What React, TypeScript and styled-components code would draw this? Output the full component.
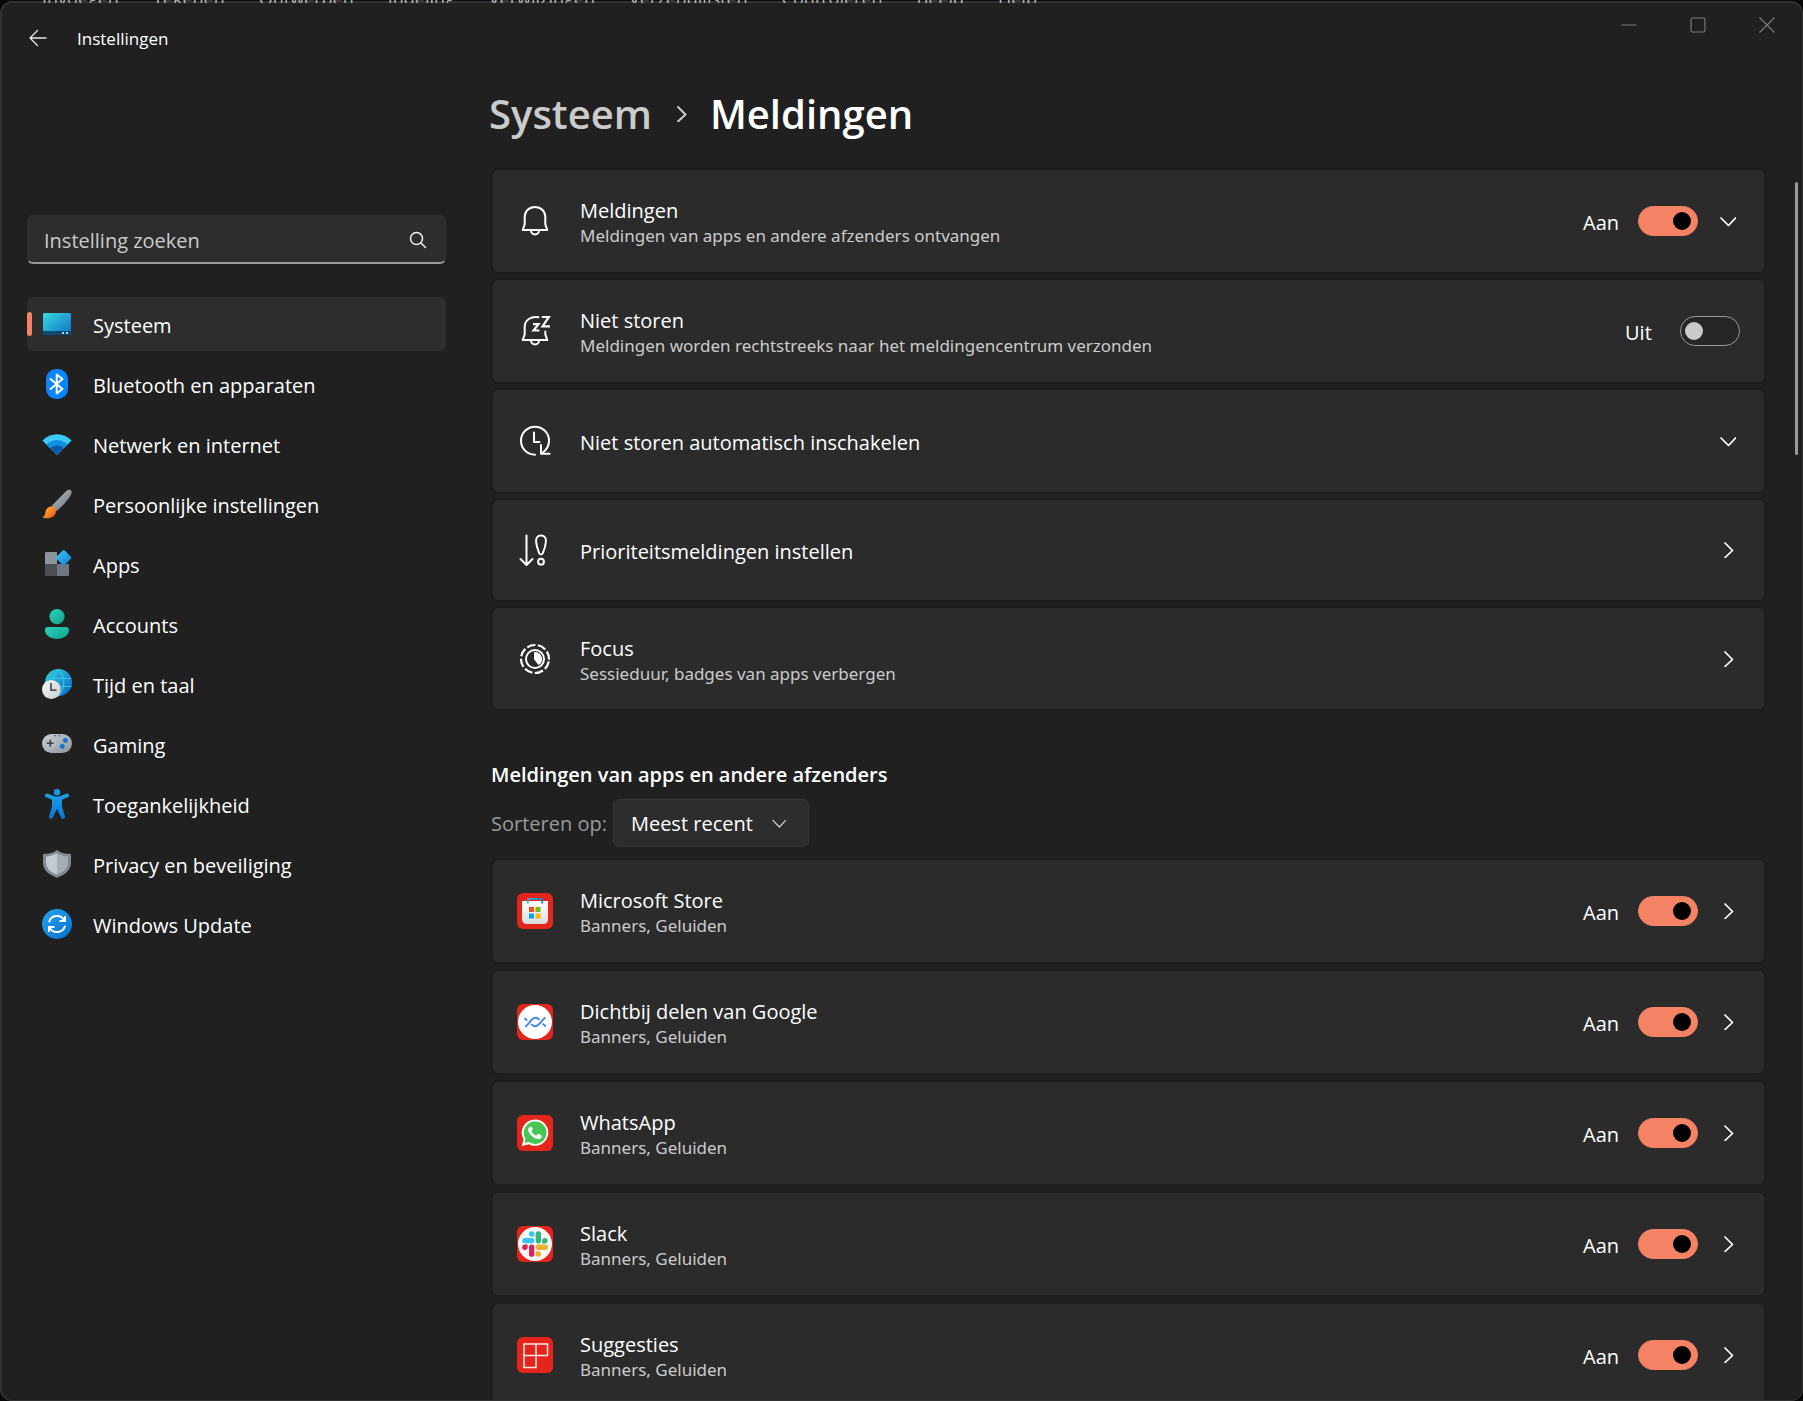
import React, { useState } from "react";
import styled, { createGlobalStyle } from "styled-components";

const color = {
  bg: "#202020",
  card: "#2b2b2b",
  control: "#2d2d2d",
  edge: "#1d1d1d",
  frame: "#333233",
  text: "#ffffff",
  muted: "#cbcbcb",
  faint: "#9a9a9a",
  accent: "#f48264",
};

const GlobalStyle = createGlobalStyle`
  *, *::before, *::after { box-sizing: border-box; }
  html, body { margin: 0; background: #0a090a; }
  body, input, select, button {
    font-family: "Open Sans", "Noto Sans", sans-serif;
    font-size: 20px;
    color: ${color.text};
  }
`;

/* ---------- window frame ---------- */

const Desktop = styled.div`
  position: relative;
  height: 100vh;
  padding-top: 1px;
  overflow: hidden;
`;

const BackdropMenu = styled.div`
  position: absolute;
  top: 0;
  left: 42px;
  display: flex;
  align-items: flex-end;
  gap: 34px;
  height: 3px;
  overflow: hidden;
  font-size: 18px;
  line-height: 10px;
  color: #b4b4b4;
`;

const Window = styled.div`
  display: flex;
  flex-direction: column;
  height: 100%;
  border: 2px solid ${color.frame};
  border-right-width: 1px;
  border-bottom-width: 1px;
  border-radius: 12px;
  background: ${color.bg};
  overflow: hidden;
`;

const TitleBar = styled.header`
  display: flex;
  align-items: flex-start;
  justify-content: space-between;
  height: 72px;
  flex: none;
`;

const TitleGroup = styled.div`
  display: flex;
  align-items: center;
  height: 70px;
`;

const WindowTitle = styled.span`
  font-size: 17px;
  line-height: 24px;
  padding: 2px 0 0 4px;
`;

const IconButton = styled.button<{ $width: number; $height: number }>`
  display: flex;
  align-items: center;
  justify-content: center;
  width: ${(p) => p.$width}px;
  height: ${(p) => p.$height}px;
  padding: 0;
  border: 0;
  background: none;
  flex: none;
`;

const CaptionButtons = styled.div`
  display: flex;
  padding-right: 1px;
`;

const Body = styled.div`
  display: flex;
  flex: 1;
  min-height: 0;
`;

/* ---------- sidebar ---------- */

const Sidebar = styled.aside`
  width: 444px;
  flex: none;
  padding: 140px 0 0 25px;
`;

const SearchBox = styled.label`
  display: flex;
  align-items: center;
  height: 49px;
  padding: 2px 18px 0 16px;
  border: 1px solid #303030;
  border-bottom: 2px solid ${color.faint};
  border-radius: 6px;
  background: ${color.control};
`;

const SearchInput = styled.input`
  flex: 1;
  min-width: 0;
  padding: 0;
  border: 0;
  outline: 0;
  background: none;
  &::placeholder {
    color: ${color.muted};
    opacity: 1;
  }
`;

const NavList = styled.nav`
  display: flex;
  flex-direction: column;
  gap: 6px;
  margin-top: 33px;
`;

const NavLink = styled.a<{ $active: boolean }>`
  position: relative;
  display: flex;
  align-items: center;
  gap: 21px;
  height: 54px;
  padding-left: 15px;
  border-radius: 6px;
  color: ${color.text};
  text-decoration: none;
  background: ${(p) => (p.$active ? color.control : "transparent")};
  &::before {
    content: "";
    display: ${(p) => (p.$active ? "block" : "none")};
    position: absolute;
    left: 0;
    top: 15px;
    width: 5px;
    height: 24px;
    border-radius: 3px;
    background: ${color.accent};
  }
`;

const NavText = styled.span`
  line-height: 28px;
  padding-top: 4px;
`;

/* ---------- content ---------- */

const Content = styled.main`
  flex: 1;
  min-width: 0;
  padding: 6px 31px 0 47px;
  overflow: hidden;
`;

const Breadcrumb = styled.div`
  display: flex;
  align-items: center;
  height: 66px;
  margin-left: -4px;
  font-size: 40px;
  line-height: 66px;
  font-weight: 600;
  white-space: nowrap;
`;

const CrumbLink = styled.a`
  color: ${color.muted};
  text-decoration: none;
`;

const CrumbGap = styled.span`
  display: flex;
  justify-content: center;
  width: 58px;
`;

const PageTitle = styled.h1`
  margin: 0;
  font: inherit;
`;

const CardList = styled.div<{ $gap: number; $top: number }>`
  display: flex;
  flex-direction: column;
  gap: ${(p) => p.$gap}px;
  margin-top: ${(p) => p.$top}px;
`;

const Card = styled.section<{ $height: number }>`
  display: flex;
  align-items: center;
  flex: none;
  height: ${(p) => p.$height}px;
  padding: 0 24px;
  border-radius: 5px;
  background: ${color.card};
  box-shadow: 0 0 0 2px ${color.edge};
`;

const CardText = styled.div`
  flex: 1;
  min-width: 0;
  padding: 4px 0 0 27px;
`;

const CardTitle = styled.div`
  line-height: 26px;
`;

const CardNote = styled.div`
  font-family: "Noto Sans", "Open Sans", sans-serif;
  font-size: 17px;
  line-height: 24px;
  color: ${color.muted};
`;

const SwitchLabel = styled.label`
  display: flex;
  align-items: center;
`;

const SwitchState = styled.span`
  width: 55px;
  line-height: 28px;
  padding-top: 4px;
`;

const Switch = styled.input`
  appearance: none;
  display: flex;
  align-items: center;
  width: 60px;
  height: 30px;
  margin: 0;
  padding: 0 4px;
  border: 1px solid ${color.faint};
  border-radius: 15px;
  background: #262626;
  &::before {
    content: "";
    width: 18px;
    height: 18px;
    border-radius: 50%;
    background: ${color.muted};
  }
  &:checked {
    justify-content: flex-end;
    padding: 0 6px;
    border-color: ${color.accent};
    background: ${color.accent};
  }
  &:checked::before {
    background: #000;
  }
`;

const CardAction = styled(IconButton)`
  margin-left: 18px;
`;

const SectionTitle = styled.h2`
  margin: 52px 0 0 -2px;
  font-size: 20px;
  line-height: 28px;
  font-weight: 600;
`;

const SortRow = styled.div`
  display: flex;
  align-items: center;
  gap: 6px;
  margin: 10px 0 0 -2px;
`;

const SortLabel = styled.label`
  color: ${color.faint};
`;

const SelectBox = styled.div`
  display: grid;
  align-items: center;
  width: 196px;
  & > * {
    grid-area: 1 / 1;
  }
  & > svg {
    justify-self: end;
    margin-right: 23px;
    pointer-events: none;
  }
`;

const Select = styled.select`
  appearance: none;
  width: 100%;
  height: 48px;
  padding: 0 40px 0 17px;
  border: 1px solid #353535;
  border-radius: 6px;
  background: ${color.control};
`;

const ScrollThumb = styled.div`
  flex: none;
  align-self: flex-start;
  width: 3px;
  height: 273px;
  margin: 107px 4px 0 0;
  border-radius: 2px;
  background: ${color.faint};
`;

/* ---------- glyphs ---------- */

const Chevron = ({ dir, size = 16, stroke = "#fff", width = 1.7 }: { dir: "down" | "right"; size?: number; stroke?: string; width?: number }) => (
  <svg width={size} height={size} viewBox="0 0 16 16" fill="none" stroke={stroke} strokeWidth={width} strokeLinecap="round" strokeLinejoin="round" aria-hidden="true">
    <path d={dir === "down" ? "M1 5 8.500 12.500 15.500 5" : "M5 1 12.500 8.500 5 15.500"} />
  </svg>
);

const Line = ({ children }: { children: React.ReactNode }) => (
  <svg width="36" height="36" viewBox="0 0 36 36" fill="none" stroke="#fff" strokeWidth="2" strokeLinecap="round" strokeLinejoin="round" aria-hidden="true">
    {children}
  </svg>
);

const BellIcon = () => (
  <Line>
    <path d="M18 4C12.200 4 7.700 8.300 7.700 13.800v7.500L5.700 27h24.600l-2-5.700v-7.500C28.300 8.300 23.800 4 18 4z" />
    <path d="M14 27.500a4 4 0 0 0 8 0" />
  </Line>
);

const SnoozeIcon = () => (
  <Line>
    <path d="M21.500 4.200C14 3 7.700 7 7.700 13.800v7.500L5.700 27h24.600l-2-5.700V18.500" />
    <path d="M14 27.500a4 4 0 0 0 8 0" />
    <path d="M16 11.200h5.500l-5 6.300h6M24.800 4h7l-6.300 9.300h7.500" strokeWidth="2.200" strokeLinecap="butt" strokeLinejoin="miter" />
  </Line>
);

const ClockIcon = () => (
  <Line>
    <path d="M18 31.700a14 14 0 1 1 14-14c0 5-2.500 9.400-7 12.300" />
    <path d="M17 9.500V19h5.500M24 22v8.800h8.500" />
  </Line>
);

const PriorityIcon = () => (
  <Line>
    <path d="M9.500 3.500v29M3.500 27l6 6 6-6" />
    <path d="M24 3.500c-3.600 0-5.200 2.600-4.900 6.200.3 4.500 1.800 8.300 3 11.300.8 2 3 2 3.800 0 1.200-3 2.700-6.800 3-11.300.3-3.600-1.300-6.200-4.900-6.200z" />
    <circle cx="24" cy="29.700" r="2.900" />
  </Line>
);

const FocusIcon = () => (
  <Line>
    <circle cx="18" cy="18" r="14" strokeWidth="2.200" strokeDasharray="8.500 2.500" strokeLinecap="butt" transform="rotate(10 18 18)" />
    <circle cx="18" cy="18" r="9" />
    <path d="M18 12v6l3.800 4.800A6.100 6.100 0 0 0 18 12z" fill="#fff" />
  </Line>
);

const Tile = ({ children }: { children: React.ReactNode }) => (
  <svg width="36" height="36" viewBox="0 0 36 36" aria-hidden="true">
    <rect width="36" height="36" rx="6" fill="#e3251b" />
    {children}
  </svg>
);

const StoreIcon = () => (
  <Tile>
    <defs>
      <linearGradient id="bag" x1="0" y1="0" x2="0" y2="1"><stop stopColor="#fff" /><stop offset="1" stopColor="#dcdcdc" /></linearGradient>
      <linearGradient id="handle" x1="0" x2="1"><stop stopColor="#2bb4e8" /><stop offset="1" stopColor="#1683cb" /></linearGradient>
    </defs>
    <path d="M5 8h26v18.500a4.500 4.500 0 0 1-4.500 4.500h-17A4.500 4.500 0 0 1 5 26.500z" fill="url(#bag)" />
    <path d="M10.800 10.500V7a1.200 1.200 0 0 1 1.200-1.200h12A1.200 1.200 0 0 1 25.200 7v3.500" fill="none" stroke="url(#handle)" strokeWidth="1.800" />
    <path d="M12 14h5v5h-5z" fill="#f25022" />
    <path d="M18.500 14h5v5h-5z" fill="#7fba00" />
    <path d="M12 20.500h5v5h-5z" fill="#00a4ef" />
    <path d="M18.500 20.500h5v5h-5z" fill="#ffb900" />
  </Tile>
);

const NearbyIcon = () => (
  <Tile>
    <circle cx="18" cy="18" r="17" fill="#fff" />
    <g fill="none" stroke="#4285f4" strokeWidth="1.900">
      <path d="M8 22.800c4-2 6-9 10.500-9 1.700 0 2.900.9 4 2M28.500 13.700c-4 2-6 8.500-10.500 8.500-1.700 0-2.900-.9-4-2" />
      <path d="M7.500 14l2.600 2.600M25.800 19.600l3 3" />
    </g>
  </Tile>
);

const WhatsAppIcon = () => (
  <Tile>
    <path d="M18 4.400A13.200 13.200 0 0 0 6.500 24.200L4.800 31l7-1.800A13.200 13.200 0 1 0 18 4.400z" fill="#fff" />
    <path d="M18 6.500A11.200 11.200 0 0 0 8.500 23.600l-1.100 4.500 4.600-1.200A11.200 11.200 0 1 0 18 6.500z" fill="#45c655" />
    <path d="M13.400 11.700c-.9 0-2.300 1.300-2.300 3.100 0 4 6.400 9.300 10.200 9.300 1.700 0 3.500-1 3.500-3.100 0-.7-2.700-2-3.500-2.200-.8 0-1.200 1.900-2.100 1.700-1.700-.4-4.100-2.700-4.600-4-.3-.8 1.200-1.400 1.200-2.200 0-.6-1-2.600-1.500-2.600z" fill="#fff" />
  </Tile>
);

const SlackIcon = () => (
  <Tile>
    <circle cx="18" cy="18" r="17" fill="#f6f6f6" />
    <g fill="#36c5f0"><path d="M14.700 5.200a2.700 2.700 0 1 0 0 5.400h2.700V7.900a2.700 2.700 0 0 0-2.700-2.700z" /><rect x="5.200" y="12" width="12.200" height="5.300" rx="2.650" /></g>
    <g fill="#2eb67d"><rect x="18.700" y="5.200" width="5.300" height="12.200" rx="2.650" /><path d="M30.600 14.700a2.700 2.700 0 1 0-5.400 0v2.700h2.700a2.700 2.700 0 0 0 2.700-2.700z" /></g>
    <g fill="#e01e5a"><rect x="12" y="18.600" width="5.300" height="12.200" rx="2.650" /><path d="M5.200 21.300a2.700 2.700 0 1 0 5.400 0v-2.700H7.900a2.700 2.700 0 0 0-2.700 2.700z" /></g>
    <g fill="#ecb22e"><rect x="18.700" y="18.600" width="12.200" height="5.300" rx="2.650" /><path d="M21.300 30.700a2.700 2.700 0 1 0 0-5.400h-2.600V28a2.700 2.700 0 0 0 2.600 2.700z" /></g>
  </Tile>
);

const SuggestIcon = () => (
  <Tile>
    <path d="M7 7h23.500v11.500H7zM7 18.500V30.500h12V7" fill="none" stroke="#ffe9e6" strokeWidth="1.500" />
  </Tile>
);

const Nav = ({ children }: { children: React.ReactNode }) => (
  <svg width="30" height="30" viewBox="0 0 30 30" aria-hidden="true">{children}</svg>
);

const navIcons: Record<string, React.ReactNode> = {
  system: (
    <Nav>
      <defs><linearGradient id="screen" x1="0" y1="0" x2="1" y2="1"><stop stopColor="#39dbe0" /><stop offset="1" stopColor="#0f6cc4" /></linearGradient></defs>
      <rect x="1" y="4" width="28" height="22" rx="1.500" fill="url(#screen)" />
      <path d="M1 22h28v2.500a1.500 1.500 0 0 1-1.500 1.500h-25A1.500 1.500 0 0 1 1 24.500z" fill="#0b4a73" />
      <path d="M20 23h2v2h-2zM24 23h2v2h-2z" fill="#b5d6e8" />
    </Nav>
  ),
  bluetooth: (
    <Nav>
      <rect x="4" width="22" height="30" rx="10" fill="#0a84ff" />
      <path d="M8.500 10 20.500 20 14.700 24.500V5.500L20.500 10 8.500 20" fill="none" stroke="#fff" strokeWidth="2" strokeLinejoin="round" strokeLinecap="round" />
    </Nav>
  ),
  network: (
    <Nav>
      <path d="M15 26 .4 11.600C8.500 3.200 21.500 3.200 29.600 11.600z" fill="#3ccbf4" />
      <path d="M15 26 4.500 15.600c5.800-6 15.200-6 21 0z" fill="#1390df" />
      <path d="M15 26 8.300 19.300c3.700-3.800 9.700-3.800 13.400 0z" fill="#0c59a4" />
    </Nav>
  ),
  personal: (
    <Nav>
      <defs>
        <linearGradient id="shaft" x1="0" y1="0" x2="1" y2="1"><stop stopColor="#b6bcc2" /><stop offset="1" stopColor="#6c737a" /></linearGradient>
        <linearGradient id="hair" x1="0" y1="0" x2="1" y2="1"><stop stopColor="#ffc02e" /><stop offset="1" stopColor="#e8501c" /></linearGradient>
      </defs>
      <path d="M9.500 17 24 2.200C26.500-.3 30.500.5 29.500 4 28 9 20 18 14.500 22z" fill="url(#shaft)" />
      <path d="M9.500 17.500c3-.4 5 2 4.500 5-.6 4.500-4.500 7-9.500 6.800C2.500 29.200 1 29 .5 28c2.500-1 2.500-2.500 3-5.500.5-2.800 3-4.700 6-5z" fill="url(#hair)" />
    </Nav>
  ),
  apps: (
    <Nav>
      <defs><linearGradient id="tile" x1="0" y1="0" x2="1" y2="1"><stop stopColor="#3fd0f5" /><stop offset="1" stopColor="#0a78d4" /></linearGradient></defs>
      <path d="M4 3h11v12H3V4a1 1 0 0 1 1-1z" fill="#8d949d" />
      <path d="M3 15h12v12H4a1 1 0 0 1-1-1z" fill="#4b4f54" />
      <path d="M15 15h12v11a1 1 0 0 1-1 1H15z" fill="#70767f" />
      <path d="M20.700 1.500a1.400 1.400 0 0 1 2 0l6.200 6.200a1.400 1.400 0 0 1 0 2l-6.200 6.200a1.400 1.400 0 0 1-2 0l-6.200-6.200a1.400 1.400 0 0 1 0-2z" fill="url(#tile)" />
    </Nav>
  ),
  accounts: (
    <Nav>
      <defs><linearGradient id="person" x1="0" y1="0" x2="1" y2="1"><stop stopColor="#2ad4bd" /><stop offset="1" stopColor="#12a08a" /></linearGradient></defs>
      <circle cx="15" cy="7.600" r="7.600" fill="url(#person)" />
      <path d="M6 18h18a3 3 0 0 1 3 3c0 5.500-5.500 9-12 9S3 26.500 3 21a3 3 0 0 1 3-3z" fill="url(#person)" />
    </Nav>
  ),
  time: (
    <Nav>
      <defs>
        <linearGradient id="globe" x1="0" y1="0" x2="1" y2="1"><stop stopColor="#2ed3d6" /><stop offset="1" stopColor="#0b66c8" /></linearGradient>
        <linearGradient id="dial" x1="0" y1="0" x2="1" y2="1"><stop stopColor="#fafafa" /><stop offset="1" stopColor="#c9cbcd" /></linearGradient>
      </defs>
      <circle cx="16.500" cy="13.500" r="13.500" fill="url(#globe)" />
      <path d="M4 9.500h25M4 17.500h25.500M16.500 0c-7 7-7 20 0 27M16.500 0c7 7 7 20 0 27" fill="none" stroke="#35c3ea" strokeWidth="1.100" />
      <circle cx="9.400" cy="20.500" r="9.400" fill="url(#dial)" />
      <path d="M9 14v7.200h5.500" fill="none" stroke="#555" strokeWidth="1.800" />
    </Nav>
  ),
  gaming: (
    <Nav>
      <defs><linearGradient id="pad" x1="0" y1="0" x2="1" y2="1"><stop stopColor="#ccd0d5" /><stop offset="1" stopColor="#8f959c" /></linearGradient></defs>
      <rect y="5" width="30" height="19" rx="9.500" fill="url(#pad)" />
      <circle cx="8.300" cy="14.300" r="5.500" fill="#b9bec4" />
      <path d="M8.300 10.800v7M4.800 14.300h7" stroke="#3c4045" strokeWidth="1.600" />
      <circle cx="23.300" cy="11.400" r="2.400" fill="#0b74d1" />
      <circle cx="20.300" cy="17.400" r="2.400" fill="#0b74d1" />
      <circle cx="13" cy="6.800" r=".8" fill="#3c4045" />
      <circle cx="17.300" cy="6.800" r=".8" fill="#3c4045" />
    </Nav>
  ),
  access: (
    <Nav>
      <defs><linearGradient id="figure" x1="0" y1="0" x2="0" y2="1"><stop stopColor="#1da0e8" /><stop offset="1" stopColor="#0b76d6" /></linearGradient></defs>
      <circle cx="15" cy="3.200" r="3.200" fill="#1a9ae6" />
      <path d="M5.700 4.700 11.500 7q3.500 1.300 7 0l5.800-2.300c2.600-.9 3.900 2.600 1.400 3.600L20 10.700v7l2.900 9.500c.7 2.600-2.700 3.800-3.800 1.300L15 19.800l-4.100 8.700c-1.100 2.500-4.500 1.300-3.800-1.300L10 17.700v-7L4.300 8.300C1.800 7.300 3.100 3.800 5.700 4.700z" fill="url(#figure)" />
    </Nav>
  ),
  privacy: (
    <Nav>
      <path d="M15 1c4 3 8.500 4 14 4v8.500C29 21 23 26 15 28.700 7 26 1 21 1 13.500V5c5.500 0 10-1 14-4z" fill="#848a91" />
      <path d="M15 4.200C11.500 6.300 8 7.300 4 7.600V13.500c0 6 4.500 9.800 11 12.200z" fill="#c5cad0" />
      <path d="M15 4.200c3.500 2.100 7 3.100 11 3.400V13.500c0 6-4.500 9.800-11 12.200z" fill="#a7adb4" />
    </Nav>
  ),
  update: (
    <Nav>
      <defs><linearGradient id="sync" x1="0" y1="0" x2="1" y2="1"><stop stopColor="#27a5ec" /><stop offset="1" stopColor="#0570d0" /></linearGradient></defs>
      <circle cx="15" cy="15" r="15" fill="url(#sync)" />
      <path d="M7 13.200a8.300 8.300 0 0 1 15-2.500M23 16.800a8.300 8.300 0 0 1-15 2.500" fill="none" stroke="#fff" strokeWidth="2" />
      <path d="M23 7v5h-5.500M7 23v-5h5.500" fill="none" stroke="#fff" strokeWidth="2" />
    </Nav>
  ),
};

/* ---------- data ---------- */

const menuWords = ["Invoegen", "Tekenen", "Ontwerpen", "Indeling", "Verwijzingen", "Verzendlijsten", "Controleren", "Beeld", "Help"];

const navItems = [
  ["system", "Systeem"],
  ["bluetooth", "Bluetooth en apparaten"],
  ["network", "Netwerk en internet"],
  ["personal", "Persoonlijke instellingen"],
  ["apps", "Apps"],
  ["accounts", "Accounts"],
  ["time", "Tijd en taal"],
  ["gaming", "Gaming"],
  ["access", "Toegankelijkheid"],
  ["privacy", "Privacy en beveiliging"],
  ["update", "Windows Update"],
];

type Row = {
  icon: React.ReactNode;
  title: string;
  note?: string;
  on?: boolean;
  chevron?: "down" | "right";
  height?: number;
};

const settings: Row[] = [
  { icon: <BellIcon />, title: "Meldingen", note: "Meldingen van apps en andere afzenders ontvangen", on: true, chevron: "down" },
  { icon: <SnoozeIcon />, title: "Niet storen", note: "Meldingen worden rechtstreeks naar het meldingencentrum verzonden", on: false },
  { icon: <ClockIcon />, title: "Niet storen automatisch inschakelen", chevron: "down" },
  { icon: <PriorityIcon />, title: "Prioriteitsmeldingen instellen", chevron: "right", height: 100 },
  { icon: <FocusIcon />, title: "Focus", note: "Sessieduur, badges van apps verbergen", chevron: "right", height: 101 },
];

const senders: Row[] = [
  { icon: <StoreIcon />, title: "Microsoft Store" },
  { icon: <NearbyIcon />, title: "Dichtbij delen van Google" },
  { icon: <WhatsAppIcon />, title: "WhatsApp" },
  { icon: <SlackIcon />, title: "Slack" },
  { icon: <SuggestIcon />, title: "Suggesties" },
].map((s) => ({ ...s, note: "Banners, Geluiden", on: true, chevron: "right" as const }));

const SettingCard = ({ icon, title, note, on, chevron, height = 102 }: Row) => {
  const [checked, setChecked] = useState(!!on);
  return (
    <Card $height={height}>
      {icon}
      <CardText>
        <CardTitle>{title}</CardTitle>
        {note && <CardNote>{note}</CardNote>}
      </CardText>
      {on !== undefined && (
        <SwitchLabel>
          <SwitchState>{checked ? "Aan" : "Uit"}</SwitchState>
          <Switch type="checkbox" role="switch" aria-label={title} checked={checked} onChange={() => setChecked(!checked)} />
        </SwitchLabel>
      )}
      {chevron && (
        <CardAction type="button" $width={24} $height={36} aria-label={title}>
          <Chevron dir={chevron} />
        </CardAction>
      )}
    </Card>
  );
};

export default function App() {
  return (
    <>
      <GlobalStyle />
      <Desktop>
        <Window>
          <TitleBar>
            <TitleGroup>
              <IconButton type="button" $width={71} $height={48} aria-label="Terug">
                <svg width="18" height="18" viewBox="0 0 18 18" fill="none" stroke="#e8e8e8" strokeWidth="1.300" strokeLinecap="round" strokeLinejoin="round"><path d="M17 9H1.500M8.500 1.500 1 9l7.500 7.500" /></svg>
              </IconButton>
              <WindowTitle>Instellingen</WindowTitle>
            </TitleGroup>
            <CaptionButtons>
              <IconButton type="button" $width={69} $height={44} aria-label="Minimaliseren">
                <svg width="16" height="16" viewBox="0 0 16 16" stroke="#7a7a7a" strokeWidth="1.200"><path d="M.5 8h15" /></svg>
              </IconButton>
              <IconButton type="button" $width={69} $height={44} aria-label="Maximaliseren">
                <svg width="16" height="16" viewBox="0 0 16 16" fill="none" stroke="#7a7a7a" strokeWidth="1.200"><rect x="1" y="1" width="14" height="14" rx="1.500" /></svg>
              </IconButton>
              <IconButton type="button" $width={69} $height={44} aria-label="Sluiten">
                <svg width="16" height="16" viewBox="0 0 16 16" stroke="#7a7a7a" strokeWidth="1.200"><path d="M.5.5l15 15M15.500.5l-15 15" /></svg>
              </IconButton>
            </CaptionButtons>
          </TitleBar>
          <Body>
            <Sidebar>
              <SearchBox>
                <SearchInput type="text" placeholder="Instelling zoeken" aria-label="Instelling zoeken" />
                <svg width="18" height="18" viewBox="0 0 18 18" fill="none" stroke="#f0f0f0" strokeWidth="1.500" strokeLinecap="round"><circle cx="7.500" cy="7.500" r="6" /><path d="M12 12l4.500 4.500" /></svg>
              </SearchBox>
              <NavList>
                {navItems.map(([id, label]) => (
                  <NavLink key={id} href={`#${id}`} $active={id === "system"}>
                    {navIcons[id]}
                    <NavText>{label}</NavText>
                  </NavLink>
                ))}
              </NavList>
            </Sidebar>
            <Content>
              <Breadcrumb>
                <CrumbLink href="#system">Systeem</CrumbLink>
                <CrumbGap><Chevron dir="right" stroke={color.muted} width={2} /></CrumbGap>
                <PageTitle>Meldingen</PageTitle>
              </Breadcrumb>
              <CardList $gap={8} $top={23}>
                {settings.map((row) => <SettingCard key={row.title} {...row} />)}
              </CardList>
              <SectionTitle>Meldingen van apps en andere afzenders</SectionTitle>
              <SortRow>
                <SortLabel htmlFor="sort">Sorteren op:</SortLabel>
                <SelectBox>
                  <Select id="sort" defaultValue="recent">
                    <option value="recent">Meest recent</option>
                    <option value="name">Naam</option>
                  </Select>
                  <Chevron dir="down" size={14} stroke="#cfcfcf" width={1.5} />
                </SelectBox>
              </SortRow>
              <CardList $gap={9} $top={13}>
                {senders.map((row) => <SettingCard key={row.title} {...row} />)}
              </CardList>
            </Content>
            <ScrollThumb />
          </Body>
        </Window>
        <BackdropMenu aria-hidden="true">
          {menuWords.map((word) => <span key={word}>{word}</span>)}
        </BackdropMenu>
      </Desktop>
    </>
  );
}
